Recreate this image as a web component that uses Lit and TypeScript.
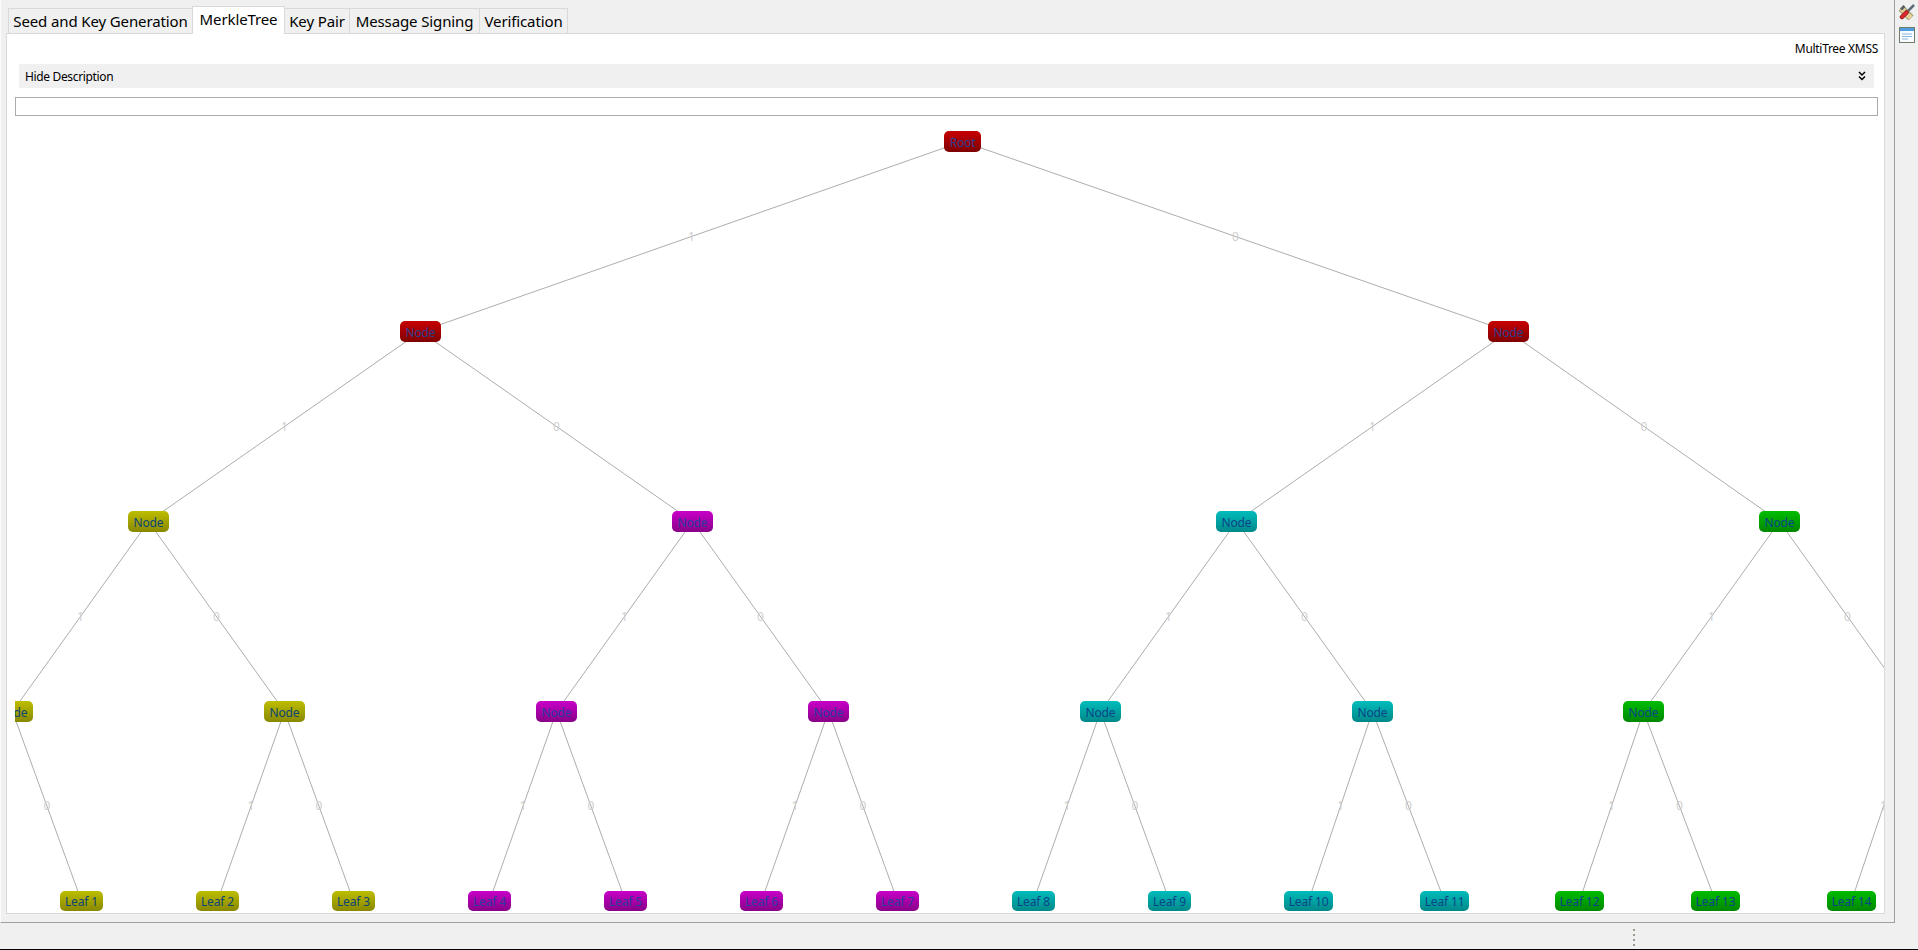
import { LitElement, html, css, svg } from 'lit';
import { customElement } from 'lit/decorators.js';

interface TreeNode {
  label: string;
  x: number;
  y: number;
  w: number;
  h: number;
  tone: string;
}

interface TreeEdge {
  x1: number;
  y1: number;
  x2: number;
  y2: number;
  bit: string;
}

// page position and width of the tree canvas, node coords below are relative to it
const ORIGIN_X = 15;
const ORIGIN_Y = 117;
const CANVAS_W = 1869;

const TONES = ['yellow', 'magenta', 'teal', 'green'];

function buildTree() {
  const nodes: TreeNode[] = [];
  const edges: TreeEdge[] = [];

  const add = (label: string, x: number, y: number, w: number, h: number, tone: string) => {
    const n = { label, x: x - ORIGIN_X, y: y - ORIGIN_Y, w, h, tone };
    nodes.push(n);
    return n;
  };
  const link = (a: TreeNode, b: TreeNode, bit: string) => {
    edges.push({ x1: a.x + a.w / 2, y1: a.y + a.h / 2, x2: b.x + b.w / 2, y2: b.y + b.h / 2, bit });
  };

  const root = add('Root', 944, 131, 37, 21, 'red');
  const second = [400, 1488].map((x) => add('Node', x, 321, 41, 21, 'red'));
  second.forEach((n, i) => link(root, n, i === 0 ? '1' : '0'));

  const third = [128, 672, 1216, 1759].map((x, i) => add('Node', x, 511, 41, 21, TONES[i]));
  third.forEach((n, i) => link(second[i >> 1], n, i % 2 === 0 ? '1' : '0'));

  const fourth = [-8, 264, 536, 808, 1080, 1352, 1623, 1895].map((x, i) =>
    add('Node', x, 701, 41, 21, TONES[i >> 1])
  );
  fourth.forEach((n, i) => link(third[i >> 1], n, i % 2 === 0 ? '1' : '0'));

  for (let i = 0; i < 16; i++) {
    // the last group sits a pixel to the left, the layout spacing is fractional
    const x = -76 + i * 136 - (i >= 12 ? 1 : 0);
    const leaf = add(`Leaf ${i}`, x, 891, i >= 10 ? 49 : 43, 20, TONES[i >> 2]);
    link(fourth[i >> 1], leaf, i % 2 === 0 ? '1' : '0');
  }
  return { nodes, edges };
}

@customElement('app-root')
export class AppRoot extends LitElement {
  static styles = css`
    :host {
      display: flex;
      flex-direction: column;
      width: 1918px;
      height: 950px;
      overflow: hidden;
      background: #f0f0f0;
      font-family: 'Noto Sans', 'Open Sans', sans-serif;
      color: #000;
    }
    .main {
      display: flex;
      height: 923px;
    }
    .workspace {
      width: 1895px;
      flex: none;
      box-sizing: border-box;
      border-left: 1px solid #fbfbfb;
      border-right: 1px solid #a0a0a0;
      border-bottom: 1px solid #a0a0a0;
      display: flex;
      flex-direction: column;
    }
    .tabs {
      display: flex;
      align-items: flex-end;
      height: 33px;
      padding-left: 7px;
      flex: none;
    }
    .tab {
      height: 25px;
      flex: none;
      box-sizing: border-box;
      border: 1px solid #d9d9d9;
      border-bottom: none;
      margin-right: -1px;
      font-size: 15px;
      letter-spacing: -0.12px;
      line-height: 24px;
      text-align: center;
      background: #f0f0f0;
      white-space: nowrap;
    }
    .tab.active {
      height: 28px;
      line-height: 25px;
      background: #fff;
      position: relative;
      z-index: 1;
      margin-bottom: -1px;
    }
    .panel {
      width: 1879px;
      height: 881px;
      margin-left: 5px;
      box-sizing: border-box;
      border: 1px solid #d9d9d9;
      background: #fff;
      display: flex;
      flex-direction: column;
    }
    .title {
      height: 30px;
      flex: none;
      padding: 6px 6px 0 0;
      box-sizing: border-box;
      text-align: right;
      font-size: 12px;
      letter-spacing: -0.3px;
      line-height: 17px;
    }
    .toggle {
      height: 24px;
      flex: none;
      margin: 0 10px 0 12px;
      padding: 0 8px 0 6px;
      background: #f0f0f0;
      display: flex;
      align-items: center;
      justify-content: space-between;
      font-size: 12px;
      letter-spacing: -0.35px;
    }
    .toggle svg {
      display: block;
    }
    .search {
      height: 19px;
      flex: none;
      margin: 9px 6px 0 8px;
      box-sizing: border-box;
      border: 1px solid #ababab;
      background: #fff;
    }
    .canvas {
      flex: 1;
      position: relative;
      overflow: hidden;
      margin: 1px 0 0 8px;
    }
    .edges {
      position: absolute;
      left: 0;
      top: 0;
      width: 100%;
      height: 100%;
    }
    .edges line {
      stroke: #adadad;
      stroke-width: 1;
    }
    .bit {
      position: absolute;
      transform: translate(-50%, -50%);
      font-size: 12px;
      line-height: 14px;
      color: #cfcfcf;
    }
    .node {
      position: absolute;
      box-sizing: border-box;
      padding-top: 1px;
      border-radius: 5px;
      display: flex;
      align-items: center;
      justify-content: center;
      font-size: 12px;
      letter-spacing: -0.15px;
      color: #10408c;
      white-space: nowrap;
    }
    .node.red {
      background: linear-gradient(#c80000, #7e0000);
      color: #2a3f90;
    }
    .node.yellow {
      background: linear-gradient(#bdbd00, #888800);
      color: #0c4478;
    }
    .node.magenta {
      background: linear-gradient(#c800c8, #880088);
      color: #2a3f98;
    }
    .node.teal {
      background: linear-gradient(#00bcbc, #008888);
      color: #0c4488;
    }
    .node.green {
      background: linear-gradient(#00bc00, #008800);
      color: #0c4488;
    }
    .side {
      flex: 1;
      display: flex;
      flex-direction: column;
      align-items: center;
      gap: 7px;
      padding: 4px 0 0 0;
    }
    .side svg {
      display: block;
    }
    .status {
      height: 27px;
      box-sizing: border-box;
      border-bottom: 1px solid #000;
      display: flex;
      flex-direction: column;
      align-items: flex-start;
      padding: 6px 0 0 1633px;
      gap: 3px;
    }
    .status i {
      display: block;
      width: 2px;
      height: 2px;
      background: #9a9a90;
    }
  `;

  private tabs = [
    { label: 'Seed and Key Generation', w: 185 },
    { label: 'MerkleTree', w: 93 },
    { label: 'Key Pair', w: 66 },
    { label: 'Message Signing', w: 131 },
    { label: 'Verification', w: 89 },
  ];

  private tree = buildTree();

  render() {
    const { nodes, edges } = this.tree;
    // whatever lies wholly off the canvas gets no label
    const shownNodes = nodes.filter((n) => n.x + n.w > 0 && n.x < CANVAS_W);
    const shownBits = edges.filter((e) => {
      const mid = (e.x1 + e.x2) / 2;
      return mid > -6 && mid < CANVAS_W + 4;
    });
    return html`
      <div class="main">
        <div class="workspace">
          <div class="tabs">
            ${this.tabs.map(
              (t, i) => html`<div class="tab ${i === 1 ? 'active' : ''}" style="width:${t.w}px">${t.label}</div>`
            )}
          </div>
          <div class="panel">
            <div class="title">MultiTree XMSS</div>
            <div class="toggle">
              <span>Hide Description</span>
              <svg width="8" height="10" viewBox="0 0 8 10" fill="none" stroke="#000" stroke-width="1.5">
                <path d="M1 1l3 3 3-3M1 5.500l3 3 3-3" />
              </svg>
            </div>
            <div class="search"></div>
            <div class="canvas">
              <svg class="edges">
                ${edges.map((e) => svg`<line x1=${e.x1} y1=${e.y1} x2=${e.x2} y2=${e.y2}></line>`)}
              </svg>
              ${shownBits.map(
                (e) => html`<span class="bit" style="left:${(e.x1 + e.x2) / 2}px;top:${(e.y1 + e.y2) / 2}px">${e.bit}</span>`
              )}
              ${shownNodes.map(
                (n) => html`<div
                  class="node ${n.tone}"
                  style="left:${n.x}px;top:${n.y}px;width:${n.w}px;height:${n.h}px"
                >${n.label}</div>`
              )}
            </div>
          </div>
        </div>
        <div class="side">
          <svg width="16" height="16" viewBox="0 0 16 16" fill="none">
            <path d="M2 4l5 5 5 5" stroke="#8f7f55" stroke-width="7" />
            <path d="M2 4l5 5 5 5" stroke="#e2cf98" stroke-width="5.500" />
            <path d="M1 4.500l3.500-3.500 2 2-3.500 3.500z" fill="#59616a" />
            <path d="M15 1l-6 6" stroke="#5e6a76" stroke-width="2.500" />
            <path d="M9 7l-2 2" stroke="#b8c0c8" stroke-width="1.500" />
            <path d="M7.500 8.500l-4.500 4.500" stroke="#8c1a1a" stroke-width="4.500" stroke-linecap="round" />
            <path d="M7.500 8.500l-4.500 4.500" stroke="#e0282e" stroke-width="3" stroke-linecap="round" />
          </svg>
          <svg width="16" height="16" viewBox="0 0 16 16">
            <rect x=".5" y=".5" width="15" height="15" fill="#f8fbff" stroke="#6f7c68" />
            <rect x="1" y="1" width="14" height="3" fill="#4f9fe0" />
            <path d="M3 7h10M3 9.500h10M3 12h6" stroke="#8ab8e0" stroke-width="1" />
          </svg>
        </div>
      </div>
      <div class="status"><i></i><i></i><i></i><i></i></div>
    `;
  }
}
